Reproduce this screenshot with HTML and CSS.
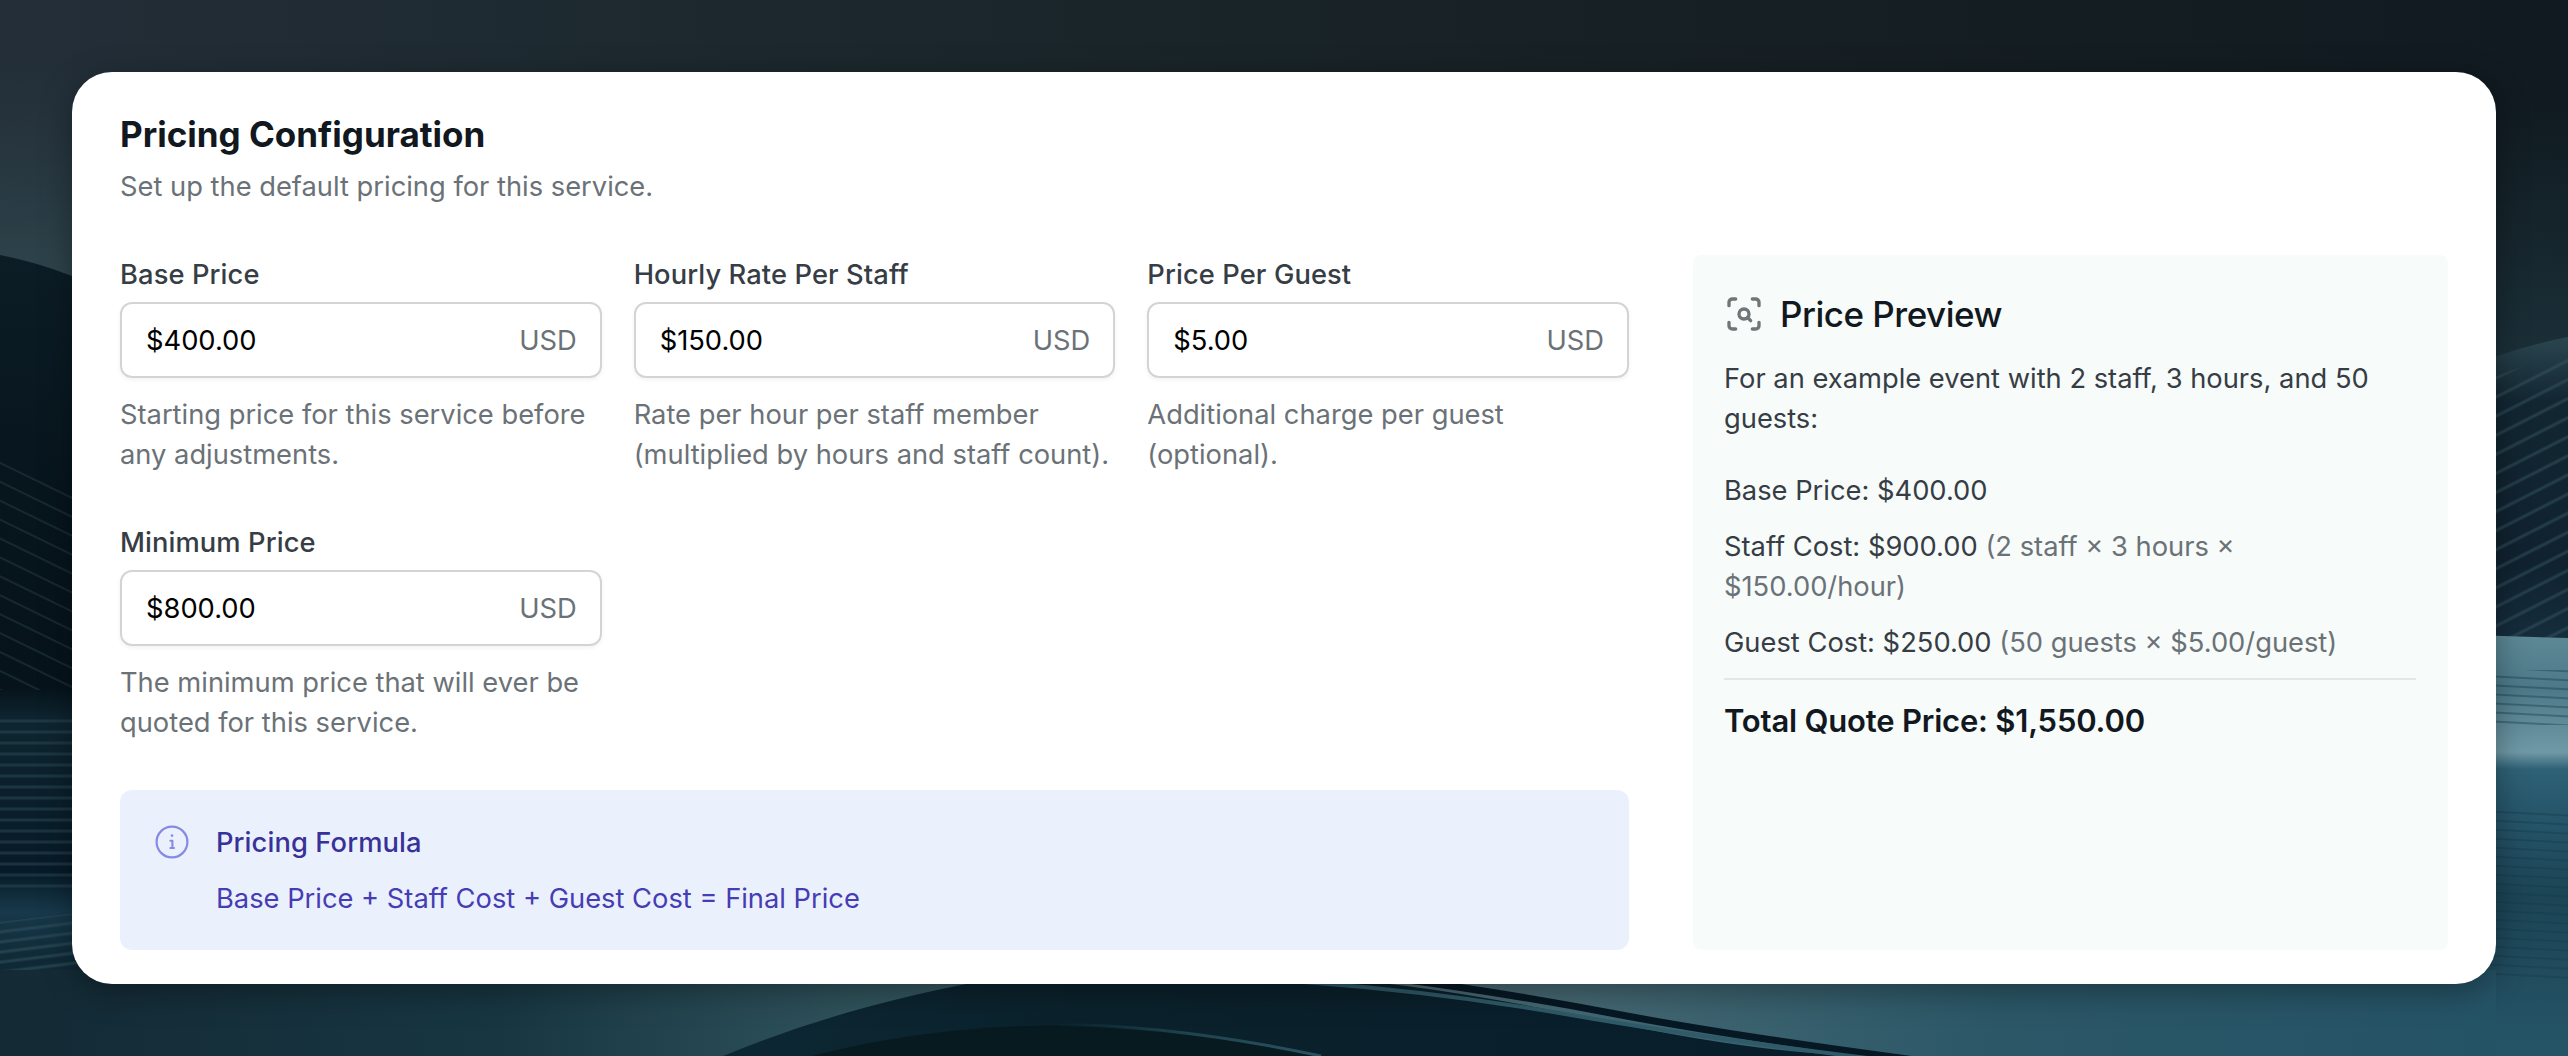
FILE: index.html
```
<!DOCTYPE html>
<html lang="en">
<head>
    <meta charset="UTF-8">
    <meta name="viewport" content="width=device-width, initial-scale=1.0">
    <title>Pricing Configuration</title>
    <link rel="stylesheet" href="styles.css">
</head>
<body>
    <svg class="backdrop" viewBox="0 0 2568 1056" preserveAspectRatio="none" aria-hidden="true">
        <defs>
            <linearGradient id="sky" x1="0" y1="0" x2="1" y2="0">
                <stop offset="0" stop-color="#232e38"/>
                <stop offset="0.35" stop-color="#1b272c"/>
                <stop offset="0.7" stop-color="#161f23"/>
                <stop offset="1" stop-color="#101a20"/>
            </linearGradient>
            <linearGradient id="haze" x1="0" y1="0" x2="0" y2="1">
                <stop offset="0" stop-color="#2b4048" stop-opacity="0"/>
                <stop offset="1" stop-color="#2f474e"/>
            </linearGradient>
            <linearGradient id="hazeRight" x1="0" y1="0" x2="0" y2="1">
                <stop offset="0" stop-color="#1c313a" stop-opacity="0"/>
                <stop offset="1" stop-color="#1c313a"/>
            </linearGradient>
            <linearGradient id="hillLeft" x1="0" y1="0" x2="0" y2="1">
                <stop offset="0" stop-color="#0c1d26"/>
                <stop offset="0.3" stop-color="#07151d"/>
                <stop offset="0.54" stop-color="#06131b"/>
                <stop offset="0.58" stop-color="#0e2530"/>
                <stop offset="0.77" stop-color="#071a27"/>
                <stop offset="0.82" stop-color="#17394a"/>
                <stop offset="0.88" stop-color="#102936"/>
                <stop offset="1" stop-color="#142a36"/>
            </linearGradient>
            <linearGradient id="hillRight" x1="0" y1="0" x2="0" y2="1">
                <stop offset="0" stop-color="#2b454f"/>
                <stop offset="0.2" stop-color="#122632"/>
                <stop offset="0.7" stop-color="#10222f"/>
                <stop offset="1" stop-color="#173040"/>
            </linearGradient>
            <linearGradient id="water" x1="0" y1="0" x2="0" y2="1">
                <stop offset="0" stop-color="#5d8997"/>
                <stop offset="0.13" stop-color="#4c7988"/>
                <stop offset="0.28" stop-color="#7099a6"/>
                <stop offset="0.32" stop-color="#2f6276"/>
                <stop offset="0.4" stop-color="#28586d"/>
                <stop offset="0.62" stop-color="#1c4455"/>
                <stop offset="1" stop-color="#265568"/>
            </linearGradient>
            <linearGradient id="floor" x1="0" y1="0" x2="1" y2="0">
                <stop offset="0" stop-color="#142a35"/>
                <stop offset="0.2" stop-color="#173642"/>
                <stop offset="0.34" stop-color="#2f525b"/>
                <stop offset="0.55" stop-color="#4d6870"/>
                <stop offset="0.64" stop-color="#436772"/>
                <stop offset="0.8" stop-color="#2b5767"/>
                <stop offset="1" stop-color="#255366"/>
            </linearGradient>
            <linearGradient id="dune" x1="0" y1="0" x2="1" y2="0">
                <stop offset="0" stop-color="#0c2734"/>
                <stop offset="0.3" stop-color="#0b222c"/>
                <stop offset="1" stop-color="#081d2b"/>
            </linearGradient>
            <linearGradient id="rim" x1="0" y1="0" x2="1" y2="0">
                <stop offset="0" stop-color="#1f4350" stop-opacity="0"/>
                <stop offset="0.5" stop-color="#1f4350"/>
                <stop offset="1" stop-color="#2a5260"/>
            </linearGradient>
            <pattern id="ridges" width="120" height="17" patternUnits="userSpaceOnUse" patternTransform="rotate(-27)">
                <path d="M0 8 H120" stroke="#365562" stroke-width="3" opacity="0.5"/>
            </pattern>
            <pattern id="slopes" width="120" height="17" patternUnits="userSpaceOnUse" patternTransform="rotate(26)">
                <path d="M0 8 H120" stroke="#27404a" stroke-width="2" opacity="0.45"/>
            </pattern>
            <pattern id="ripples" width="120" height="11" patternUnits="userSpaceOnUse">
                <path d="M0 6 H120" stroke="#2c4955" stroke-width="3" opacity="0.5"/>
            </pattern>
            <pattern id="swell" width="120" height="10" patternUnits="userSpaceOnUse" patternTransform="rotate(-7)">
                <path d="M0 5 H120" stroke="#2c4f5b" stroke-width="3" opacity="0.6"/>
            </pattern>
            <pattern id="waves" width="200" height="9" patternUnits="userSpaceOnUse" patternTransform="rotate(3)">
                <path d="M0 5 H200" stroke="#14384a" stroke-width="2" opacity="0.4"/>
            </pattern>
        </defs>
        <rect width="2568" height="1056" fill="url(#sky)"/>
        <rect y="60" width="120" height="240" fill="url(#haze)"/>
        <rect x="2440" y="100" width="128" height="280" fill="url(#hazeRight)"/>
        <path d="M0 255 Q36 262 72 276 L120 300 V1056 H0 Z" fill="url(#hillLeft)"/>
        <path d="M0 455 L120 510 V690 H0 Z" fill="url(#slopes)"/>
        <path d="M0 715 H120 V890 H0 Z" fill="url(#ripples)"/>
        <path d="M0 922 L120 908 V986 L0 1000 Z" fill="url(#swell)"/>
        <path d="M2440 380 Q2500 350 2568 337 V660 H2440 Z" fill="url(#hillRight)"/>
        <path d="M2440 400 Q2500 372 2568 352 V660 H2440 Z" fill="url(#ridges)"/>
        <path d="M2440 634 L2568 638 V1056 H2440 Z" fill="url(#water)"/>
        <path d="M2440 670 H2568 V725 H2440 Z" fill="url(#waves)"/>
        <path d="M2440 810 H2568 V980 H2440 Z" fill="url(#waves)"/>
        <rect y="970" width="2496" height="86" fill="url(#floor)"/>
        <path d="M723 1056 Q850 1003 1010 976 H1300 Q1420 982 1600 1020 T1890 1056 Z" fill="url(#dune)"/>
        <path d="M812 1056 Q1050 995 1321 1056 Z" fill="#071a20"/>
        <path d="M1054 1025 Q1170 1024 1321 1056" fill="none" stroke="url(#rim)" stroke-width="3"/>
        <path d="M1393 978 Q1500 992 1616 1014 T1930 1062" fill="none" stroke="#061824" stroke-width="7"/>
        <path d="M1304 982 Q1440 992 1571 1015 T1900 1062" fill="none" stroke="#2f5a68" stroke-width="4"/>
    </svg>

    <main class="card">
        <header class="card-header">
            <h1>Pricing Configuration</h1>
            <p>Set up the default pricing for this service.</p>
        </header>

        <div class="columns">
            <div class="settings">
                <div class="fields">
                    <div class="field">
                        <label for="base">Base Price</label>
                        <div class="input">
                            <input id="base" type="text" value="$400.00">
                            <span>USD</span>
                        </div>
                        <p>Starting price for this service before any adjustments.</p>
                    </div>
                    <div class="field">
                        <label for="hourly">Hourly Rate Per Staff</label>
                        <div class="input">
                            <input id="hourly" type="text" value="$150.00">
                            <span>USD</span>
                        </div>
                        <p>Rate per hour per staff member (multiplied by hours and staff count).</p>
                    </div>
                    <div class="field">
                        <label for="guest">Price Per Guest</label>
                        <div class="input">
                            <input id="guest" type="text" value="$5.00">
                            <span>USD</span>
                        </div>
                        <p>Additional charge per guest (optional).</p>
                    </div>
                    <div class="field">
                        <label for="minimum">Minimum Price</label>
                        <div class="input">
                            <input id="minimum" type="text" value="$800.00">
                            <span>USD</span>
                        </div>
                        <p>The minimum price that will ever be quoted for this service.</p>
                    </div>
                </div>

                <div class="formula">
                    <svg class="info-icon" viewBox="0 0 40 40" fill="none" stroke="currentColor" stroke-linecap="round" stroke-linejoin="round">
                        <circle cx="20" cy="20" r="15.4" stroke-width="2.2"/>
                        <path d="M18.4 18.8 H20.4 V26 M18.4 26 H22" stroke-width="2.1"/>
                        <circle cx="20" cy="13.6" r="1.3" fill="currentColor" stroke="none"/>
                    </svg>
                    <div>
                        <h2>Pricing Formula</h2>
                        <p>Base Price + Staff Cost + Guest Cost = Final Price</p>
                    </div>
                </div>
            </div>

            <aside class="preview">
                <h2>
                    <svg class="scan-icon" viewBox="0 0 24 24" fill="none" stroke="currentColor" stroke-width="2" stroke-linecap="round" stroke-linejoin="round">
                        <path d="M3 7V5a2 2 0 0 1 2-2h2"/>
                        <path d="M17 3h2a2 2 0 0 1 2 2v2"/>
                        <path d="M21 17v2a2 2 0 0 1-2 2h-2"/>
                        <path d="M7 21H5a2 2 0 0 1-2-2v-2"/>
                        <circle cx="12" cy="12" r="3"/>
                        <path d="m16 16-1.9-1.9"/>
                    </svg>
                    Price Preview
                </h2>
                <p class="example">For an example event with 2 staff, 3 hours, and 50 guests:</p>
                <ul>
                    <li>Base Price: $400.00</li>
                    <li>Staff Cost: $900.00 <span>(2 staff × 3 hours × $150.00/hour)</span></li>
                    <li>Guest Cost: $250.00 <span>(50 guests × $5.00/guest)</span></li>
                </ul>
                <p class="total">Total Quote Price: $1,550.00</p>
            </aside>
        </div>
    </main>
</body>
</html>
```

FILE: styles.css
```
* {
    box-sizing: border-box;
}
body {
    margin: 0;
    min-height: 1056px;
    padding: 72px;
    font-family: Inter, "Liberation Sans", sans-serif;
    font-size: 27.3px;
    line-height: 40px;
    color: #363d45;
    background-color: #16242b;
    overflow: hidden;
}
h1, h2, p, ul {
    margin: 0;
    padding: 0;
}
.backdrop {
    position: absolute;
    inset: 0;
    width: 100%;
    height: 1056px;
    z-index: -1;
}
.card {
    height: 912px;
    padding: 39px 48px 34px;
    display: flex;
    flex-direction: column;
    background-color: #fff;
    border-radius: 40px;
    box-shadow: 0 8px 32px rgba(0, 0, 0, 0.35);
}
.card-header h1 {
    font-size: 35px;
    line-height: 46px;
    font-weight: 700;
    color: #111820;
}
.card-header p {
    margin-top: 10px;
    color: #6b7277;
}
.columns {
    flex: 1;
    display: flex;
    gap: 64px;
    margin-top: 48px;
}
.settings {
    width: 1509px;
    display: flex;
    flex-direction: column;
    justify-content: space-between;
}
.fields {
    display: grid;
    grid-template-columns: repeat(3, minmax(0, 1fr));
    gap: 48px 32px;
}
.field label {
    display: block;
    font-weight: 500;
    letter-spacing: 0.1px;
}
.input {
    display: flex;
    align-items: center;
    height: 76px;
    margin: 7px 0 17px;
    padding: 1px 23px 0 24px;
    border: 2px solid #d2d4d6;
    border-radius: 12px;
    box-shadow: 0 2px 4px rgba(0, 0, 0, 0.05);
}
.input input {
    flex: 1;
    min-width: 0;
    padding: 0;
    border: 0;
    font: inherit;
    color: #000;
    background: none;
}
.input span,
.field p {
    color: #6b7277;
}
.formula {
    display: flex;
    gap: 24px;
    height: 160px;
    padding: 33px 32px 31px;
    background-color: #ebf1fc;
    border-radius: 12px;
}
.info-icon {
    width: 40px;
    height: 40px;
    margin-top: -1px;
    color: #858ae2;
}
.formula h2 {
    font-size: 27.3px;
    line-height: 40px;
    font-weight: 500;
    letter-spacing: 0.1px;
    color: #38319a;
}
.formula p {
    margin-top: 16px;
    color: #463cb4;
}
.preview {
    flex: 1;
    padding: 31px 32px 32px 31px;
    background-color: #f7fbfa;
    border-radius: 8px;
}
.preview h2 {
    display: flex;
    align-items: center;
    gap: 16px;
    font-size: 35px;
    line-height: 56px;
    font-weight: 500;
    letter-spacing: -0.5px;
    color: #111820;
}
.scan-icon {
    width: 40px;
    height: 40px;
    color: #6f7678;
}
.example {
    margin-top: 17px;
}
.preview ul {
    margin-top: 32px;
    list-style: none;
}
.preview li + li {
    margin-top: 16px;
}
.preview li span {
    color: #6b7277;
}
.total {
    margin-top: 15px;
    padding-top: 17px;
    border-top: 2px solid #e3e7e8;
    font-size: 31px;
    line-height: 48px;
    font-weight: 600;
    letter-spacing: -0.2px;
    color: #111820;
}
```
